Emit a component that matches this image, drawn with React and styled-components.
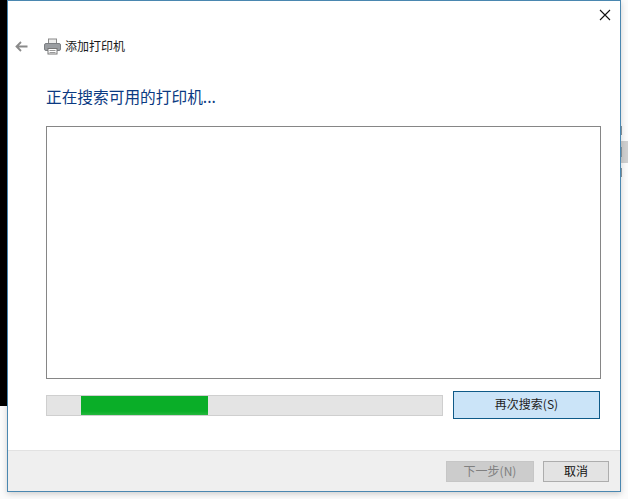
import React from "react";
import styled, { createGlobalStyle } from "styled-components";

const Global = createGlobalStyle`
  html, body { margin: 0; padding: 0; background: #fff; }
  body { font-family: "Noto Sans CJK SC", "Liberation Sans", sans-serif; }
`;

const Desktop = styled.div`
  position: relative;
  width: 628px;
  height: 499px;
  overflow: hidden;
  background: #fbfbfb;
`;
const BlackStrip = styled.div`
  position: absolute;
  left: 0;
  top: 0;
  width: 8px;
  height: 406px;
  background: #000;
`;
const SideMark = styled.div`
  position: absolute;
  left: 620px;
  top: ${(p) => p.$top}px;
  width: ${(p) => p.$w}px;
  height: ${(p) => p.$h}px;
  background: ${(p) => p.$c};
`;
const Window = styled.div`
  position: relative;
  box-sizing: border-box;
  margin-left: 7px;
  width: 614px;
  height: 492px;
  border: 1px solid #4a87b0;
  background: #fff;
  display: flex;
  flex-direction: column;
  box-shadow: 0 2px 6px rgba(0, 0, 0, 0.18);
`;
const CloseBtn = styled.button`
  position: absolute;
  top: 8px;
  right: 9px;
  width: 12px;
  height: 12px;
  padding: 0;
  border: 0;
  background: none;
  display: flex;
`;
const Main = styled.div`
  flex: 1;
  display: flex;
  flex-direction: column;
  padding: 35px 19px 0 38px;
`;
const Nav = styled.div`
  display: flex;
  align-items: center;
  height: 20px;
  margin-left: -31px;
`;
const BackIcon = styled.svg`
  width: 13px;
  height: 11px;
  margin-right: 16px;
`;
const PrinterIcon = styled.svg`
  width: 17px;
  height: 17px;
  margin-right: 4px;
`;
const NavTitle = styled.span`
  font-size: 12px;
  line-height: 20px;
  color: #1a1a1a;
`;
const Heading = styled.h1`
  margin: 30px 0 0;
  font-size: 15.7px;
  font-weight: 400;
  line-height: 22px;
  height: 22px;
  color: #0b3a82;
  white-space: nowrap;
`;
const ListBox = styled.div`
  box-sizing: border-box;
  margin-top: 18px;
  width: 555px;
  height: 253px;
  border: 1px solid #868686;
  background: #fff;
`;
const ActionRow = styled.div`
  display: flex;
  align-items: center;
  margin-top: 12px;
  width: 554px;
  height: 28px;
`;
const Progress = styled.div`
  box-sizing: border-box;
  position: relative;
  width: 397px;
  height: 21px;
  border: 1px solid #cfcfcf;
  background: #e4e4e4;
  margin-right: 10px;
`;
const ProgressFill = styled.div`
  position: absolute;
  top: 0;
  bottom: 0;
  left: 34px;
  width: 127px;
  background: linear-gradient(#0aae28 0, #0aae28 80%, #25b83e 100%);
`;
const SearchBtn = styled.button`
  box-sizing: border-box;
  width: 147px;
  height: 28px;
  padding: 0 0 3px;
  border: 1px solid #0f5a88;
  background: #cbe4f8;
  color: #222;
  font: 400 12px "Noto Sans CJK SC", "Liberation Sans", sans-serif;
`;
const Footer = styled.div`
  box-sizing: border-box;
  height: 41px;
  border-top: 1px solid #e2e2e2;
  background: #efefef;
  display: flex;
  justify-content: flex-end;
  align-items: flex-start;
  gap: 9px;
  padding: 10px 11px 0 0;
`;
const FootBtn = styled.button`
  box-sizing: border-box;
  width: ${(p) => p.$w}px;
  height: 21px;
  padding: 0 0 2px;
  border: 1px solid ${(p) => (p.disabled ? "#c6c6c6" : "#adadad")};
  background: ${(p) => (p.disabled ? "#cccccc" : "#e3e3e3")};
  color: ${(p) => (p.disabled ? "#808080" : "#111")};
  font: 400 12px "Noto Sans CJK SC", "Liberation Sans", sans-serif;
`;

export default function App() {
  return (
    <Desktop>
      <Global />
      <BlackStrip />
      <SideMark $top={126} $h={9} $w={2} $c="#8d98a0" />
      <SideMark $top={141} $h={22} $w={8} $c="#cfcfcf" />
      <SideMark $top={147} $h={10} $w={2} $c="#8d98a0" />
      <SideMark $top={168} $h={9} $w={2} $c="#8d98a0" />
      <Window>
        <CloseBtn aria-label="关闭">
          <svg width="12" height="12" viewBox="0 0 12 12">
            <path d="M1 1l10 10M11 1L1 11" stroke="#111" strokeWidth="1.1" fill="none" />
          </svg>
        </CloseBtn>
        <Main>
          <Nav>
            <BackIcon viewBox="0 0 13 11">
              <path d="M12.5 5.5H2M6 1L1.5 5.5 6 10" stroke="#8a8a8a" strokeWidth="1.8" fill="none" />
            </BackIcon>
            <PrinterIcon viewBox="0 0 17 17">
              <rect x="4.5" y="1" width="8" height="5" fill="#ececec" stroke="#8a8a8a" />
              <rect x="0.5" y="5.5" width="16" height="7" rx="1.5" fill="#9a9da1" stroke="#7c7f83" />
              <rect x="4" y="10.5" width="9" height="5.5" fill="#fff" stroke="#777" />
              <path d="M5.5 12.5h6M5.5 14.5h6" stroke="#999" />
            </PrinterIcon>
            <NavTitle>添加打印机</NavTitle>
          </Nav>
          <Heading>正在搜索可用的打印机...</Heading>
          <ListBox />
          <ActionRow>
            <Progress>
              <ProgressFill />
            </Progress>
            <SearchBtn>再次搜索(S)</SearchBtn>
          </ActionRow>
        </Main>
        <Footer>
          <FootBtn $w={88} disabled>下一步(N)</FootBtn>
          <FootBtn $w={66}>取消</FootBtn>
        </Footer>
      </Window>
    </Desktop>
  );
}
